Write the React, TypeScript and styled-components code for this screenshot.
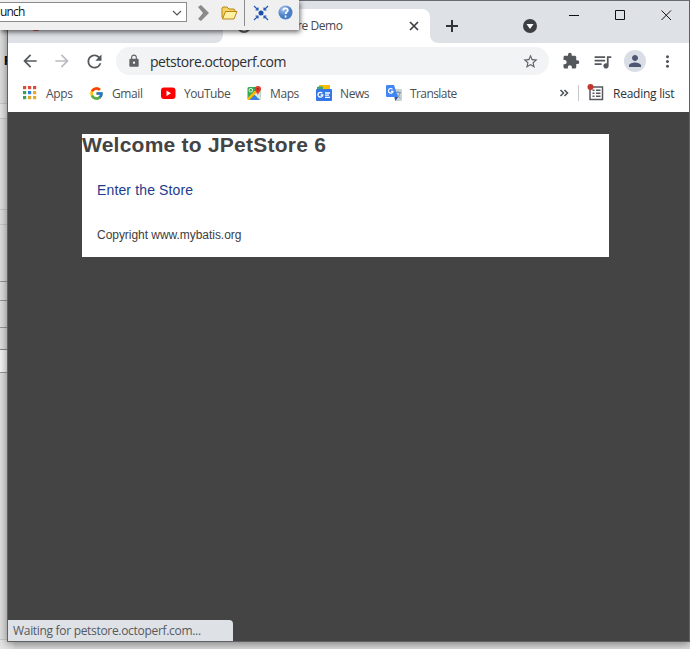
import React from "react";
import styled, { createGlobalStyle } from "styled-components";
import {
  MdArrowBack, MdArrowForward, MdRefresh, MdLock, MdStarBorder,
  MdExtension, MdQueueMusic, MdPerson, MdMoreVert,
} from "react-icons/md";
import { FcGoogle } from "react-icons/fc";

const Global = createGlobalStyle`
  * { box-sizing: border-box; }
  body { margin: 0; overflow: hidden; background: #dcdcdc; font-family: "Open Sans", "Noto Sans", sans-serif; }
  svg { display: block; flex: none; }
`;

const Desktop = styled.main`
  position: relative;
  width: 690px;
  height: 649px;
  overflow: hidden;
  background: #dedede;
`;
const BackApp = styled.div`
  display: flex;
  flex-direction: column;
  width: 14px;
  height: 649px;
  font: bold 13px "Liberation Sans", sans-serif;
`;
const BackRow = styled.div<{ $h: number; $bg?: string; $line?: string }>`
  flex: none;
  height: ${(p) => p.$h}px;
  background: ${(p) => p.$bg ?? "#dfdfdf"};
  border-bottom: 1px solid ${(p) => p.$line ?? "#c9c9c9"};
`;
const BackHeading = styled(BackRow)`
  padding: 53px 0 0 4px;
  line-height: 15px;
`;

const Window = styled.section`
  position: absolute;
  left: 7px;
  top: 0;
  width: 683px;
  height: 642px;
  display: flex;
  flex-direction: column;
  border: 1px solid #606164;
  border-top-color: #6b6c70;
  background: #fff;
  box-shadow: 0 2px 9px rgba(0, 0, 0, 0.45);
`;
const TabStrip = styled.header`
  flex: none;
  height: 42px;
  display: flex;
  background: #dee1e6;
`;
const TabsBase = styled.div`
  display: flex;
  width: 430px;
  height: 42px;
  background: linear-gradient(#dee1e6 21px, #fff 21px);
`;
const IdleTab = styled.div`
  width: 215px;
  height: 42px;
  padding: 15px 0 0 20px;
  background: #dee1e6;
  border-bottom-right-radius: 8px;
`;
const ActiveTab = styled.div`
  display: flex;
  align-items: center;
  width: 207px;
  height: 34px;
  margin-top: 8px;
  padding: 0 11px 0 13px;
  border-radius: 8px 8px 0 0;
  background: #fff;
`;
const Flare = styled.div`
  width: 8px;
  height: 21px;
  align-self: flex-end;
  background: #dee1e6;
  border-bottom-left-radius: 8px;
`;
const TabTitle = styled.span`
  flex: 1;
  margin-left: 5px;
  padding-bottom: 1px;
  font-size: 12px;
  letter-spacing: -0.42px;
  color: #45494d;
  white-space: nowrap;
`;
const Initial = styled.span`
  font-family: Roboto, sans-serif;
`;
const WindowControls = styled.div`
  display: flex;
  flex: 1;
  align-items: flex-start;
  justify-content: flex-end;
`;

const Toolbar = styled.nav`
  flex: none;
  display: flex;
  align-items: center;
  height: 37px;
  padding: 0 0 1px 6px;
  color: #5f6368;
  background: #fff;
`;
const Slot = styled.div<{ $w?: number; $c?: string }>`
  display: flex;
  flex: none;
  align-items: center;
  justify-content: center;
  width: ${(p) => p.$w ?? 32}px;
  color: ${(p) => p.$c ?? "#54585d"};
`;
const Omnibox = styled.div`
  display: flex;
  align-items: center;
  width: 433px;
  height: 28px;
  margin: 0 6px;
  padding: 0 10px 0 11px;
  border-radius: 14px;
  background: #f1f3f4;
`;
const Address = styled.span`
  flex: 1;
  margin-left: 9px;
  font-size: 14px;
  letter-spacing: -0.47px;
  color: #2c2f33;
`;
const Avatar = styled.div`
  display: grid;
  place-items: center;
  width: 22px;
  height: 22px;
  border-radius: 50%;
  background: #d9dde6;
  color: #4d5771;
`;

const Bookmarks = styled.div`
  flex: none;
  display: flex;
  align-items: center;
  height: 32px;
  padding: 0 0 6px 14px;
  background: #fff;
`;
const Bookmark = styled.div<{ $w: number; $track: number; $c?: string }>`
  display: flex;
  flex: none;
  align-items: center;
  gap: 8px;
  width: ${(p) => p.$w}px;
  font-size: 12px;
  letter-spacing: ${(p) => p.$track}px;
  white-space: nowrap;
  color: ${(p) => p.$c ?? "#4b4f54"};
`;
const Divider = styled.i`
  width: 1px;
  height: 16px;
  background: #c5c8cc;
`;

const Page = styled.article`
  flex: 1;
  padding: 22px 80px 0 74px;
  background: #444;
  font-family: "Liberation Sans", Arial, sans-serif;
`;
const Card = styled.div`
  display: flex;
  flex-direction: column;
  width: 527px;
  height: 123px;
  background: #fff;
  color: #444;
`;
const Heading = styled.h2`
  height: 24px;
  margin: 0;
  font-size: 21px;
  line-height: 22px;
  letter-spacing: 0.24px;
`;
const StoreLink = styled.a`
  margin: 23px 15px 0;
  font-size: 14px;
  line-height: 18px;
  letter-spacing: 0.14px;
  color: #1c3c8c;
`;
const Copyright = styled.p`
  margin: 28px 15px 0;
  font-size: 12px;
  line-height: 16px;
  letter-spacing: -0.04px;
  color: #3d3d3d;
`;
const Status = styled.div`
  position: absolute;
  left: 0;
  bottom: 0;
  width: 225px;
  height: 21px;
  padding-left: 5px;
  border-top-right-radius: 4px;
  background: #dee1e6;
  color: #55595e;
  font-size: 12px;
  line-height: 22px;
  letter-spacing: -0.31px;
  white-space: nowrap;
`;

const Launcher = styled.aside`
  position: absolute;
  left: 0;
  top: 0;
  width: 299px;
  height: 30px;
  display: flex;
  align-items: center;
  padding: 0 0 5px 0;
  background: #f0f0f0;
  box-shadow: 1px 2px 5px rgba(0, 0, 0, 0.6);
`;
const Combo = styled.div`
  display: flex;
  align-items: center;
  justify-content: space-between;
  width: 187px;
  height: 20px;
  margin-top: -1px;
  padding: 0 4px 0 0;
  border: 1px solid #8b8b8b;
  border-left: 0;
  background: #fff;
  color: #111;
  font-size: 12px;
  line-height: 14px;
  letter-spacing: -0.8px;
  svg { margin-top: 2px; }
`;
const Rule = styled.i`
  width: 1px;
  height: 27px;
  margin: 0 5px 0 6px;
  background: #8b8b8b;
`;

const AppsIcon = () => {
  const rows = [["#d94b3d", "#d94b3d", "#d94b3d"], ["#35a35a", "#347edb", "#e3ab2c"], ["#35a35a", "#d7a82d", "#e3ab2c"]];
  return (
    <svg width="16" height="16">
      {rows.map((r, y) => r.map((c, x) => <rect key={`${x}${y}`} x={1 + x * 5} y={1 + y * 5} width="3.2" height="3.2" fill={c} />))}
    </svg>
  );
};
const YouTubeIcon = () => (
  <svg width="16" height="16"><rect x="1" y="2.5" width="14.5" height="11.5" rx="3" fill="#f00" /><path d="M6.5 5.5v5.4l4.5-2.7z" fill="#fff" /></svg>
);
const MapsIcon = () => (
  <svg width="16" height="16" viewBox="0 0 16 16">
    <rect x="1.5" y="2" width="13" height="13" rx="1.5" fill="#34a853" />
    <path d="M8 9 13.5 3.500 14.500 5v9z" fill="#d9dfe3" />
    <path d="M2 12.500 9.500 5l2 2L3.500 15H2z" fill="#fbbc04" />
    <path d="M3.500 15 8.500 10l5 5z" fill="#3b7ded" />
    <path d="m8.500 9.500 1-1 5 5-1 1z" fill="#e6eaed" />
    <circle cx="4.800" cy="5.200" r="1.800" fill="none" stroke="#e5f4e8" />
    <path d="M8.800 4a3.100 3.100 0 0 1 6.200 0c0 2.300-2.400 3-3.100 6.200C11.200 7 8.800 6.300 8.800 4z" fill="#e5392e" />
    <circle cx="11.900" cy="4" r="1" fill="#9e231b" />
  </svg>
);
const NewsIcon = () => (
  <svg width="16" height="16" viewBox="0 0 16 16">
    <path d="M1 2h5v4H1z" fill="#34a853" /><path d="M3 0h11v5H3z" fill="#fbbc04" /><path d="M2 1.500h5v3H2z" fill="#3fa568" />
    <rect y="4" width="16" height="12" rx="1" fill="#3578e5" />
    <path d="M6.300 8.200A2.400 2.400 0 1 0 6.800 10H4.700M9 8h5M9 10.200h4M9 12.400h5" fill="none" stroke="#fff" strokeWidth="1.300" />
  </svg>
);
const TranslateIcon = () => (
  <svg width="16" height="16" viewBox="0 0 16 16">
    <path d="M6 4h9q1 0 1 1v10q0 1-1 1H9z" fill="#cdd2d8" />
    <path d="M9 7.500h6M12 6v1.500M14 8c-1 3-2 4-4 5M10.500 9c1 2 2 3 4 4" stroke="#7898a6" fill="none" />
    <path d="M1 0h7l4 12H1q-1 0-1-1V1q0-1 1-1z" fill="#4285f4" />
    <path d="M8.500 12H12l-2.500 4z" fill="#2855a8" />
    <path d="M6.500 4.300A2.300 2.300 0 1 0 7 6.300H4.900" fill="none" stroke="#fff" strokeWidth="1.200" />
  </svg>
);
const ReadingIcon = () => (
  <svg width="18" height="18" viewBox="0 0 18 18">
    <rect x="3" y="3" width="12.500" height="12.500" fill="#fff" stroke="#55585c" strokeWidth="1.500" />
    <path d="M5.500 6.300h2M9 6.300h4.500M5.500 9.300h2M9 9.300h4.500M5.500 12.300h2M9 12.300h4.500" stroke="#55585c" strokeWidth="1.400" />
    <circle cx="3.500" cy="3" r="3" fill="#c5352d" />
  </svg>
);

const bookmarks = [
  { name: "Apps", icon: <AppsIcon />, w: 67, track: -0.3 },
  { name: "Gmail", icon: <FcGoogle size={15} />, w: 71, track: -0.4 },
  { name: "YouTube", icon: <YouTubeIcon />, w: 86, track: -0.45 },
  { name: "Maps", icon: <MapsIcon />, w: 70, track: -0.4 },
  { name: "News", icon: <NewsIcon />, w: 70, track: -0.4 },
  { name: "Translate", icon: <TranslateIcon />, w: 164, track: -0.58 },
];

export default function App() {
  return (
    <>
      <Global />
      <Desktop>
        <BackApp>
          <BackHeading $h={104}>F</BackHeading>
          <BackRow $h={15} $bg="#e6e6e6" />
          <BackRow $h={91} />
          <BackRow $h={15} />
          <BackRow $h={57} $line="#999" />
          <BackRow $h={19} $line="#999" />
          <BackRow $h={27} $line="#999" />
          <BackRow $h={22} $line="#888" />
          <BackRow $h={23} $bg="#f5f5f5" $line="#999" />
          <BackRow $h={267} $bg="#e0e0e0" />
          <BackRow $h={9} $bg="#e6e6e6" $line="#e6e6e6" />
        </BackApp>
        <Window>
          <TabStrip>
            <TabsBase>
              <IdleTab>
                <svg width="16" height="16"><circle cx="8" cy="7.500" r="7.500" fill="#d23b3f" /></svg>
              </IdleTab>
              <ActiveTab>
                <svg width="16" height="16"><circle cx="8" cy="8" r="6" fill="none" stroke="#5d6166" strokeWidth="2" /></svg>
                <TabTitle><Initial>J</Initial>PetStore Demo</TabTitle>
                <svg width="10" height="10"><path d="M1 1l8 8M9 1 1 9" stroke="#3c4043" strokeWidth="1.700" /></svg>
              </ActiveTab>
              <Flare />
            </TabsBase>
            <WindowControls>
              <svg width="251" height="42">
                <path d="M14 19v12M8 25h12" stroke="#303337" strokeWidth="2" />
                <circle cx="92" cy="25" r="7" fill="#3c4043" /><path d="M88.500 23h7l-3.500 5z" fill="#fff" />
                <path d="M131 14.500h10M177.500 9.500h9v9h-9zM223.500 9.500l9.500 9.500m0-9.500-9.500 9.500" stroke="#111" fill="none" />
              </svg>
            </WindowControls>
          </TabStrip>
          <Toolbar>
            <Slot><MdArrowBack size={20} /></Slot>
            <Slot $c="#b9bcc0"><MdArrowForward size={20} /></Slot>
            <Slot><MdRefresh size={21} /></Slot>
            <Omnibox>
              <MdLock size={14} /><Address>petstore.octoperf.com</Address><MdStarBorder size={17} />
            </Omnibox>
            <Slot><MdExtension size={18} /></Slot>
            <Slot $w={31}><MdQueueMusic size={21} /></Slot>
            <Slot $w={33}><Avatar><MdPerson size={18} /></Avatar></Slot>
            <Slot><MdMoreVert size={19} /></Slot>
          </Toolbar>
          <Bookmarks>
            {bookmarks.map((b) => (
              <Bookmark key={b.name} $w={b.w} $track={b.track}>{b.icon}{b.name}</Bookmark>
            ))}
            <Slot $w={28}>
              <svg width="10" height="10"><path d="M1.500 2l3 3-3 3M5.500 2l3 3-3 3" fill="none" stroke="#505459" strokeWidth="1.600" /></svg>
            </Slot>
            <Divider />
            <Slot $w={34}><ReadingIcon /></Slot>
            <Bookmark $w={66} $track={-0.25} $c="#2f3236">Reading list</Bookmark>
          </Bookmarks>
          <Page>
            <Card>
              <Heading>Welcome to JPetStore 6</Heading>
              <StoreLink>Enter the Store</StoreLink>
              <Copyright>Copyright www.mybatis.org</Copyright>
            </Card>
          </Page>
          <Status>Waiting for petstore.octoperf.com...</Status>
        </Window>
        <Launcher>
          <Combo>
            <span>unch</span>
            <svg width="10" height="10"><path d="M1 3l4 4 4-4" fill="none" stroke="#555" strokeWidth="1.200" /></svg>
          </Combo>
          <Slot $w={34}>
            <svg width="12" height="16"><path d="M0 2 3 0l8 8-8 8-3-2 5-6z" fill="#8a8a8a" /></svg>
          </Slot>
          <svg width="17" height="14">
            <path d="M1 11V2l1-1h4l2 2h5l1 1v2H5l-3 7z" fill="#f5d262" stroke="#b78616" />
            <path d="M4.500 5.500H16L13 13H1.500z" fill="#fff0a2" stroke="#b78616" />
          </svg>
          <Rule />
          <Slot $w={21}>
            <svg width="16" height="16">
              <circle cx="8" cy="8" r="2.500" fill="#1b4dab" />
              <path d="M1 1l4 4M2.500 5H5V2.500M15 1l-4 4M11 2.500V5h2.500M1 15l4-4M2.500 11H5v2.500M15 15l-4-4M13.500 11H11v2.500" fill="none" stroke="#2859b4" strokeWidth="1.200" />
            </svg>
          </Slot>
          <Slot $w={28}>
            <svg width="15" height="15">
              <defs><radialGradient id="help" cx="35%" cy="25%"><stop stopColor="#a8c8f0" /><stop offset="1" stopColor="#4a7fc8" /></radialGradient></defs>
              <circle cx="7.500" cy="7.500" r="7" fill="url(#help)" />
              <path d="M5.200 5.500c0-3 4.800-2.700 4.600 0C9.700 7 7.600 7 7.600 9M7.600 10.500v2" fill="none" stroke="#fff" strokeWidth="1.700" />
            </svg>
          </Slot>
        </Launcher>
      </Desktop>
    </>
  );
}
